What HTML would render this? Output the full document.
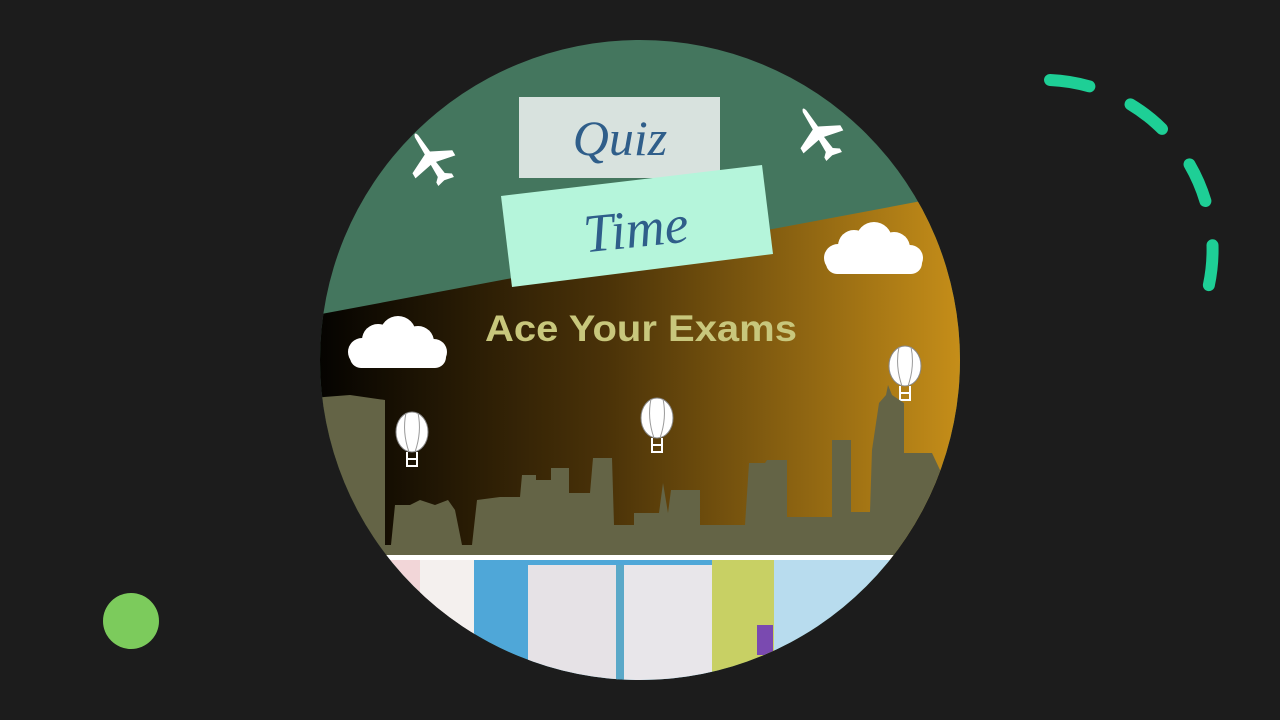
<!DOCTYPE html>
<html><head><style>html,body{margin:0;padding:0;background:#1c1c1c;width:1280px;height:720px;overflow:hidden}</style></head>
<body>
<svg width="1280" height="720" viewBox="0 0 1280 720" xmlns="http://www.w3.org/2000/svg">
<defs>
<clipPath id="c"><circle cx="640" cy="360" r="320"/></clipPath>
<linearGradient id="g" x1="0" x2="1" y1="0" y2="0">
<stop offset="0" stop-color="#000"/><stop offset="0.45" stop-color="#4a3208"/><stop offset="1" stop-color="#cc931a"/>
</linearGradient>
<g id="plane" fill="#fff"><path d="M-24 2 L-4 0 L6 -20 L12 -20 L8 0 L22 -2 L26 -8 L30 -8 L28 2 L30 10 L26 10 L22 6 L8 6 L12 26 L6 26 L-4 6 L-24 6 Q-30 4 -24 2Z"/></g>
<g id="bal"><ellipse cx="0" cy="0" rx="16" ry="20" fill="#fff" stroke="#888" stroke-width="1"/><path d="M-6 -19 Q-10 0 -3 20 M6 -19 Q10 0 3 20" stroke="#999" fill="none"/><path d="M-5 20 L-5 34 L5 34 L5 20 M-5 27 L5 27" stroke="#fff" stroke-width="2" fill="none"/></g>
<g id="cloud" fill="#fff"><circle cx="-34" cy="8" r="14"/><circle cx="-18" cy="-4" r="16"/><circle cx="2" cy="-10" r="18"/><circle cx="22" cy="-2" r="16"/><circle cx="38" cy="8" r="13"/><rect x="-46" y="2" width="96" height="22" rx="11"/></g>
</defs>
<g clip-path="url(#c)">
<rect x="300" y="30" width="680" height="660" fill="#44765e"/>
<polygon points="300,318 980,190 980,560 300,560" fill="url(#g)"/>
<rect x="519" y="97" width="201" height="81" fill="#d8e2de"/>
<polygon points="501,196 762,165 773,254 512,287" fill="#b5f5db"/>
<text x="620" y="155" text-anchor="middle" font-family="Liberation Serif, serif" font-style="italic" font-size="50" fill="#2f5e8a">Quiz</text>
<text x="636" y="247" text-anchor="middle" font-family="Liberation Serif, serif" font-style="italic" font-size="54" fill="#2f5e8a" transform="rotate(-6 636 230)">Time</text>
<text x="641" y="341" text-anchor="middle" font-family="Liberation Sans, sans-serif" font-weight="bold" font-size="37" fill="#c8c77c" textLength="312" lengthAdjust="spacingAndGlyphs">Ace Your Exams</text>
<use href="#plane" transform="translate(432,155) rotate(60)"/>
<use href="#plane" transform="translate(820,130) rotate(60)"/>
<use href="#cloud" transform="translate(396,344)"/>
<use href="#cloud" transform="translate(872,250)"/>
<use href="#bal" transform="translate(412,432)"/>
<use href="#bal" transform="translate(657,418)"/>
<use href="#bal" transform="translate(905,366)"/>
<polygon fill="#646446" points="300,560 300,400 324,397 350,395 385,400 385,545 391,545 395,505 410,505 420,500 435,505 448,500 455,510 462,545 472,545 477,500 500,497 520,497 522,475 536,475 536,480 551,480 551,468 569,468 569,493 590,493 593,458 612,458 614,525 634,525 634,513 659,513 663,483 668,513 671,490 700,490 700,525 745,525 749,463 765,463 767,460 787,460 787,517 832,517 832,440 851,440 851,512 870,512 872,450 879,403 886,395 888,385 892,395 904,403 904,453 932,453 940,470 960,470 960,560"/>
<rect x="300" y="555" width="680" height="5" fill="#fff"/>
<rect x="300" y="560" width="175" height="130" fill="#f2d6d8"/>
<rect x="420" y="560" width="55" height="130" fill="#f4f0ee"/>
<rect x="474" y="560" width="240" height="130" fill="#4fa7d8"/>
<rect x="528" y="565" width="90" height="125" fill="#e6e2e6"/>
<rect x="622" y="565" width="90" height="125" fill="#e8e6ea"/>
<rect x="616" y="565" width="8" height="125" fill="#5aa8c8"/>
<rect x="712" y="560" width="62" height="130" fill="#c8d064"/>
<rect x="757" y="625" width="16" height="30" fill="#7a4ab0"/>
<rect x="774" y="560" width="200" height="130" fill="#b8dcee"/>
</g>
<path d="M1050 80 A170 170 0 0 1 1205 300" fill="none" stroke="#1ecf96" stroke-width="12" stroke-linecap="round" stroke-dasharray="40 45"/>
<circle cx="131" cy="621" r="28" fill="#7ccb5c"/>
</svg>
</body></html>
